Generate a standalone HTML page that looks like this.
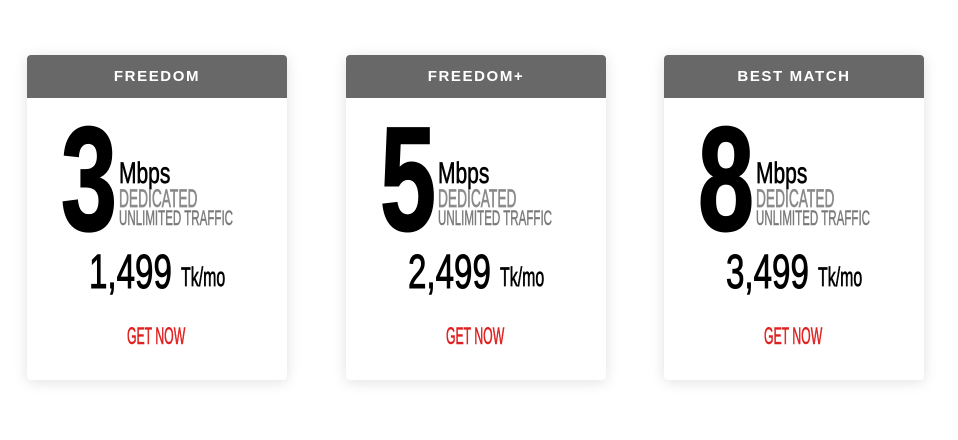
<!DOCTYPE html>
<html><head><style>
*{margin:0;padding:0;box-sizing:border-box}
body{width:958px;height:440px;background:#fff;position:relative;overflow:hidden;font-family:"Liberation Sans",sans-serif}
.card{position:absolute;top:55px;width:260px;height:325px;background:#fff;border-radius:4px;box-shadow:0 2px 14px rgba(0,0,0,0.12);overflow:hidden}
.hd{height:43px;background:#686868;color:#fff;font-weight:bold;font-size:15px;letter-spacing:1.6px;text-align:center;line-height:43px}
.t{position:absolute;line-height:1;white-space:nowrap;transform-origin:left top}
.big{font-size:148px;font-weight:bold;color:#000;left:34px;transform:scaleX(.68);-webkit-text-stroke:2px #000}
.mb{font-size:30px;color:#000;left:92px;transform:scaleX(.70);-webkit-text-stroke:.7px #000}
.de{font-size:25px;color:#8a8a8a;left:92px;transform:scaleX(.55);-webkit-text-stroke:.7px #8a8a8a}
.un{font-size:21px;color:#7a7a7a;left:92px;transform:scaleX(.55);-webkit-text-stroke:.5px #7a7a7a}
.pr{font-size:48px;color:#000;left:62px;transform:scaleX(.69);-webkit-text-stroke:1px #000}
.tk{font-size:27px;color:#000;left:154px;transform:scaleX(.59);-webkit-text-stroke:.7px #000}
.go{font-size:24px;color:#e02020;left:100px;transform:scaleX(.51);-webkit-text-stroke:.6px #e02020}
</style></head><body>
<div class="card" style="left:27px"><div class="hd">FREEDOM</div>
<div class="t big" style="top:51px">3</div><div class="t mb" style="top:104px">Mbps</div><div class="t de" style="top:132px">DEDICATED</div><div class="t un" style="top:153px">UNLIMITED TRAFFIC</div><div class="t pr" style="top:194px">1,499</div><div class="t tk" style="top:209px">Tk/mo</div><div class="t go" style="top:270px">GET NOW</div></div>
<div class="card" style="left:346px"><div class="hd">FREEDOM+</div>
<div class="t big" style="top:51px">5</div><div class="t mb" style="top:104px">Mbps</div><div class="t de" style="top:132px">DEDICATED</div><div class="t un" style="top:153px">UNLIMITED TRAFFIC</div><div class="t pr" style="top:194px">2,499</div><div class="t tk" style="top:209px">Tk/mo</div><div class="t go" style="top:270px">GET NOW</div></div>
<div class="card" style="left:664px"><div class="hd">BEST MATCH</div>
<div class="t big" style="top:51px">8</div><div class="t mb" style="top:104px">Mbps</div><div class="t de" style="top:132px">DEDICATED</div><div class="t un" style="top:153px">UNLIMITED TRAFFIC</div><div class="t pr" style="top:194px">3,499</div><div class="t tk" style="top:209px">Tk/mo</div><div class="t go" style="top:270px">GET NOW</div></div>
</body></html>
